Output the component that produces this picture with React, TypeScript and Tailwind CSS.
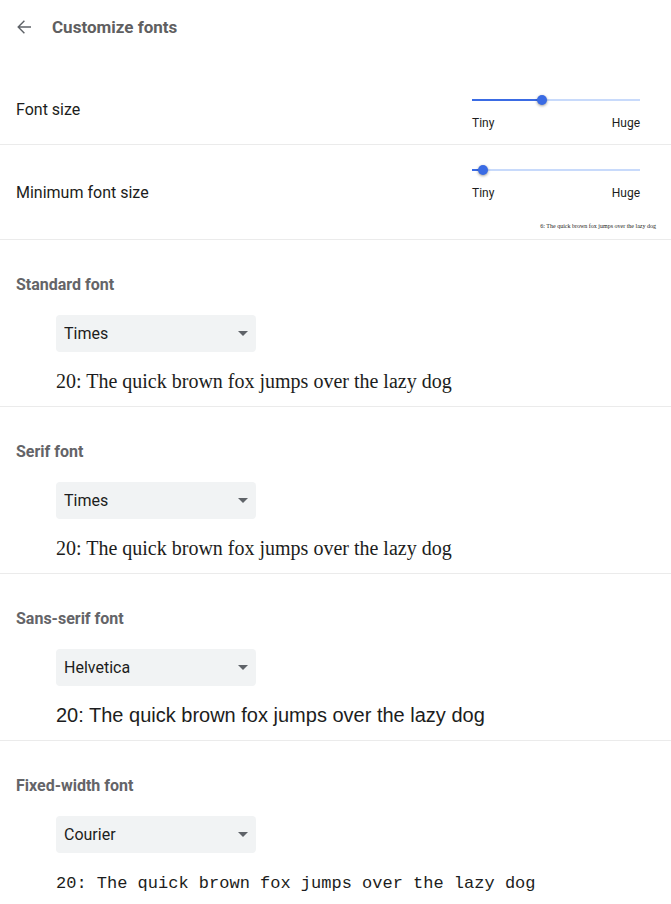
import { useState } from "react";

const SAMPLE = "The quick brown fox jumps over the lazy dog";

const sections = [
    { id: "standard", title: "Standard font", value: "Times", sample: "font-['Liberation_Serif',serif] text-xl pt-1" },
    { id: "serif", title: "Serif font", value: "Times", sample: "font-['Liberation_Serif',serif] text-xl pt-1" },
    { id: "sans", title: "Sans-serif font", value: "Helvetica", sample: "font-['Liberation_Sans',sans-serif] text-xl pt-1" },
    { id: "fixed", title: "Fixed-width font", value: "Courier", sample: "font-['Liberation_Mono',monospace] text-[17px] pt-2" },
];

const fonts = ["Times", "Helvetica", "Courier", "Arial", "Georgia"];

function SizeSlider({ label, initial }: { label: string; initial: number }) {
    const [value, setValue] = useState(initial);

    return (
        <div className="w-[168px]">
            <div className="relative h-3">
                <div className="absolute inset-x-0 top-[5px] h-[2px] bg-[#c8dafb]">
                    <div className="h-full bg-[#3a6be4]" style={{ width: `${value}%` }} />
                </div>
                <input
                    type="range"
                    aria-label={label}
                    min={0}
                    max={100}
                    step={0.5}
                    value={value}
                    onChange={(e) => setValue(Number(e.target.value))}
                    className="absolute -left-[5px] top-0 h-3 w-[178px] cursor-pointer appearance-none bg-transparent [&::-webkit-slider-thumb]:h-[10px] [&::-webkit-slider-thumb]:w-[10px] [&::-webkit-slider-thumb]:appearance-none [&::-webkit-slider-thumb]:rounded-full [&::-webkit-slider-thumb]:bg-[#3a6be4] [&::-webkit-slider-thumb]:shadow-[0_1px_3px_rgba(0,0,0,0.4)]"
                />
            </div>
            <div className="mt-[7px] flex justify-between pb-px text-xs leading-5">
                <span>Tiny</span>
                <span>Huge</span>
            </div>
        </div>
    );
}

function FontSection({ id, title, value, sample }: (typeof sections)[number]) {
    const [font, setFont] = useState(value);

    return (
        <section className="border-b border-[#ebebeb] px-4 pt-[33px] last:border-b-0">
            <h2 className="text-base font-bold leading-6 text-[#646468]">
                <label htmlFor={id}>{title}</label>
            </h2>
            <div className="mt-[18px] pl-10">
                <div className="relative h-[37px] w-[200px]">
                    <select
                        id={id}
                        value={font}
                        onChange={(e) => setFont(e.target.value)}
                        className="h-full w-full appearance-none rounded bg-[#f1f3f4] pl-2 pr-8 text-base outline-none"
                    >
                        {fonts.map((name) => (
                            <option key={name}>{name}</option>
                        ))}
                    </select>
                    <svg viewBox="0 0 10 5" className="pointer-events-none absolute right-2 top-4 h-[5px] w-[10px]" fill="#5f6368">
                        <path d="M0 0h10L5 5z" />
                    </svg>
                </div>
                <p className={`flex h-[54px] items-center leading-6 ${sample}`}>20: {SAMPLE}</p>
            </div>
        </section>
    );
}

export default function App() {
    return (
        <main className="min-h-screen bg-white font-[Roboto,sans-serif] text-base text-[#1c1d20]">
            <header className="flex h-[54px] items-center gap-5 px-4">
                <button type="button" aria-label="Back" className="flex w-4 justify-center text-[#5f6368]">
                    <svg viewBox="0 0 14 14" className="h-3.5 w-3.5" fill="none" stroke="currentColor" strokeWidth="1.4">
                        <path d="M14 7H1.5M7.4 0.8L1.2 7l6.2 6.2" />
                    </svg>
                </button>
                <h1 className="text-[17px] font-bold leading-7 text-[#5f5f61]">Customize fonts</h1>
            </header>

            <div className="mt-5 flex h-[71px] items-center justify-between border-b border-[#ebebeb] pl-4 pr-[31px]">
                <span className="pt-0.5">Font size</span>
                <div className="pt-2.5">
                    <SizeSlider label="Font size" initial={41.5} />
                </div>
            </div>

            <div className="flex h-[95px] items-center justify-between border-b border-[#ebebeb] pl-4">
                <span className="pt-0.5">Minimum font size</span>
                <div className="flex flex-col items-end pt-3">
                    <div className="pr-[31px]">
                        <SizeSlider label="Minimum font size" initial={6.5} />
                    </div>
                    <p className="mt-4 pr-[15px] font-['Liberation_Serif',serif] text-[6px] leading-[12px]">6: {SAMPLE}</p>
                </div>
            </div>

            {sections.map((section) => (
                <FontSection key={section.id} {...section} />
            ))}
        </main>
    );
}
